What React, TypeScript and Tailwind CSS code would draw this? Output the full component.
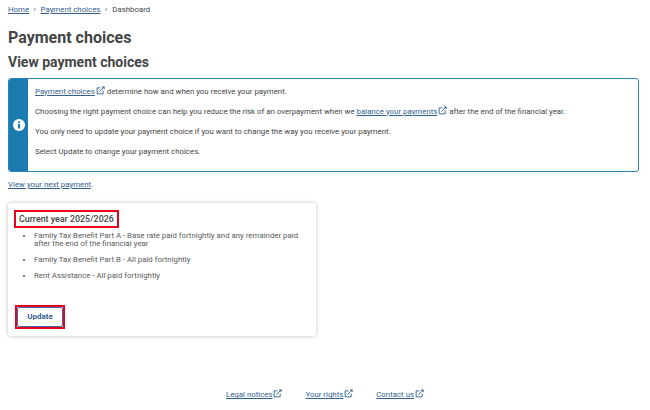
import React from "react";

const Ext = () => (
  <svg viewBox="0 0 12 12" className="inline-block w-[9px] h-[9px] ml-[1px] align-[-1px] text-[#2f5f8f]" fill="none">
    <path d="M6 2.5H1.5V10.5H9.5V6" stroke="currentColor" strokeWidth="1.2" />
    <path d="M4.5 7.5L9.5 2.5" stroke="currentColor" strokeWidth="1.2" />
    <path d="M7.5 0.5H11.5V4.5Z" fill="currentColor" />
  </svg>
);

const A = ({ children }: { children: React.ReactNode }) => (
  <span className="text-[#33608f] underline underline-offset-1">{children}</span>
);

export default function App() {
  return (
    <div className="w-[650px] h-[410px] overflow-hidden bg-white text-[#444] font-['Roboto',sans-serif] flex flex-col px-[8px]">
      {/* breadcrumb */}
      <div className="flex items-center text-[7.85px] h-[10px] mt-[5px] leading-none">
        <A>Home</A>
        <span className="mx-[4.5px] text-[8px]">›</span>
        <A>Payment choices</A>
        <span className="ml-[4.5px] mr-[5px] text-[8px]">›</span>
        <span>Dashboard</span>
      </div>

      <h1 className="text-[16px] font-bold leading-[22px] mt-[12px]">Payment choices</h1>
      <h2 className="text-[14px] font-bold leading-[20px] mt-[3px]">View payment choices</h2>

      {/* info box */}
      <div className="flex w-[631px] h-[94px] mt-[6px] border border-[#2a85b8] rounded-[3px] overflow-hidden shrink-0">
        <div className="w-[19px] bg-[#1b7bb0] flex items-center justify-center shrink-0">
          <svg viewBox="0 0 12 12" className="w-[12px] h-[12px]">
            <circle cx="6" cy="6" r="6" fill="#fff" />
            <rect x="5" y="5" width="2" height="4.5" fill="#1b7bb0" />
            <rect x="5" y="2.5" width="2" height="1.6" fill="#1b7bb0" />
          </svg>
        </div>
        <div className="pl-[7px] pt-[6.5px] text-[7.85px] leading-[12px] flex flex-col gap-[8px]">
          <p><A>Payment choices</A><Ext /> determine how and when you receive your payment.</p>
          <p>Choosing the right payment choice can help you reduce the risk of an overpayment when we <A>balance your payments</A><Ext /> after the end of the financial year.</p>
          <p>You only need to update your payment choice if you want to change the way you receive your payment.</p>
          <p>Select Update to change your payment choices.</p>
        </div>
      </div>

      <p className="text-[7.85px] leading-[12px] mt-[7px]"><A>View your next payment</A>.</p>

      {/* card */}
      <div className="w-[308px] h-[133px] mt-[12px] rounded-[3px] shadow-[0_0_4px_rgba(0,0,0,0.25)] flex flex-col pl-[6px] pt-[7px] shrink-0">
        <div className="self-start border-2 border-[#e8001c] text-[8.9px] font-medium leading-[12px] px-[3px] py-[1px]">Current year 2025/2026</div>
        <ul className="list-disc ml-[20px] mt-[4px] w-[270px] text-[7.85px] leading-[8px] text-[#5a5a5a] flex flex-col gap-[8px]">
          <li>Family Tax Benefit Part A - Base rate paid fortnightly and any remainder paid after the end of the financial year</li>
          <li>Family Tax Benefit Part B - All paid fortnightly</li>
          <li>Rent Assistance - All paid fortnightly</li>
        </ul>
        <div className="mt-auto mb-[7px] ml-[1px] self-start border-2 border-[#e8001c]">
          <button className="block w-[46px] h-[20px] border border-[#3e6db0] rounded-[2px] text-[8px] font-bold text-[#33608f]">Update</button>
        </div>
      </div>

      {/* footer */}
      <div className="flex justify-center gap-[23px] text-[7.85px] mt-auto mb-[9px]">
        <span><A>Legal notices</A><Ext /></span>
        <span><A>Your rights</A><Ext /></span>
        <span><A>Contact us</A><Ext /></span>
      </div>
    </div>
  );
}
